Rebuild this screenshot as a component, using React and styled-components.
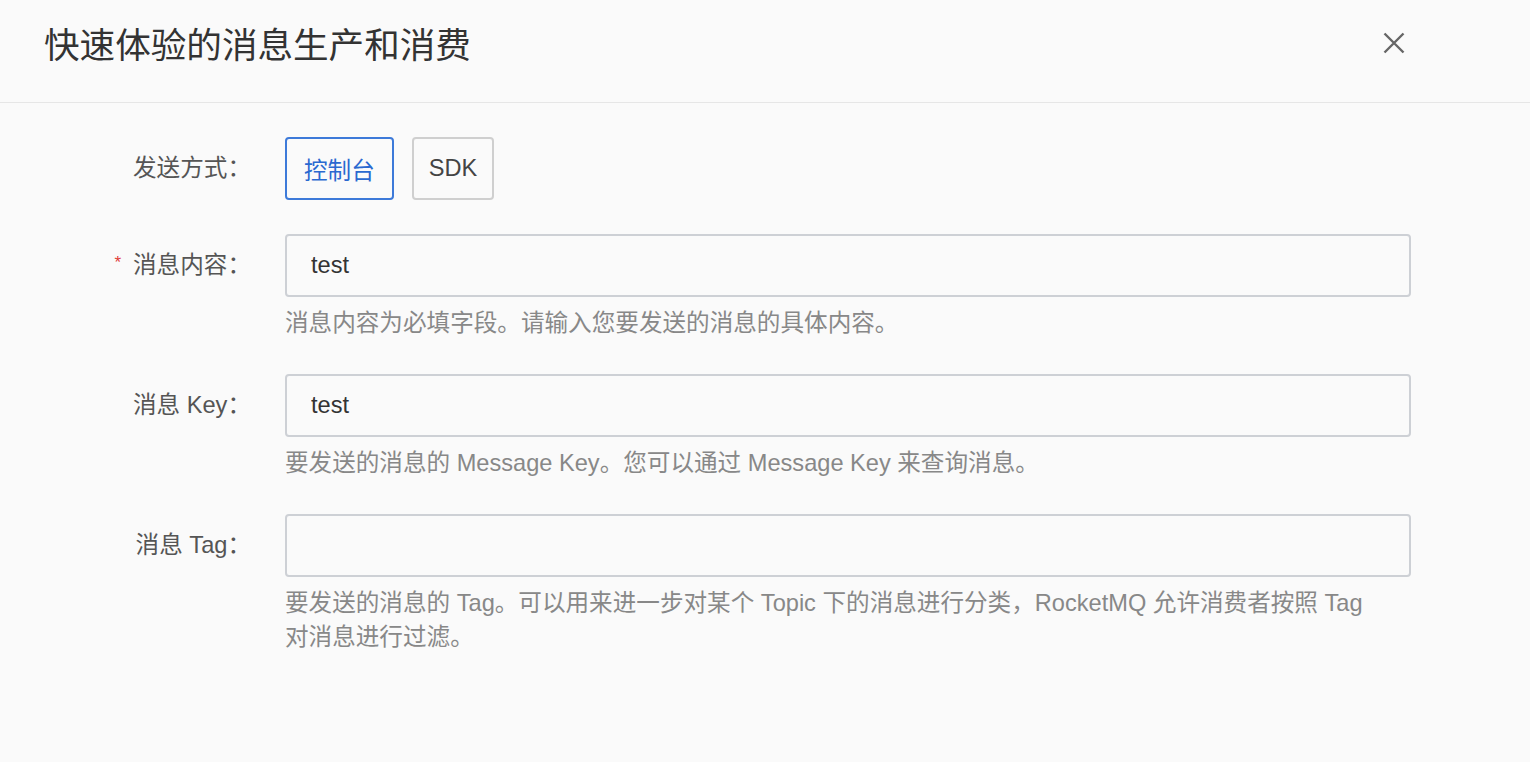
import React from "react";
import styled, { createGlobalStyle } from "styled-components";

const Global = createGlobalStyle`
  html, body { margin: 0; padding: 0; background: #fafafa; }
  body { font-family: "Liberation Sans", "Noto Sans CJK SC", sans-serif; color: #333; }
  * { box-sizing: border-box; }
`;

const Page = styled.div`
  width: 1530px;
  min-height: 762px;
  background: #fafafa;
`;

const Header = styled.header`
  height: 103px;
  border-bottom: 1px solid #e6e6e6;
  display: flex;
  align-items: center;
  justify-content: space-between;
  padding: 0 124px 16px 44px;
`;

const Title = styled.h1`
  margin: 0;
  font-size: 35.6px;
  font-weight: 400;
  color: #333;
  font-family: "Noto Sans CJK SC", sans-serif;
  line-height: 1;
`;

const CloseButton = styled.button`
  border: 0;
  background: transparent;
  padding: 0;
  width: 24px;
  height: 24px;
  display: flex;
  align-items: center;
  justify-content: center;
  cursor: pointer;
`;

const Form = styled.div`
  padding: 34px 119px 0 0;
  display: flex;
  flex-direction: column;
  gap: 34px;
`;

const Row = styled.div`
  display: grid;
  grid-template-columns: 251px 1fr;
  column-gap: 34px;
  align-items: start;
`;

const Label = styled.div`
  text-align: right;
  font-size: 23.6px;
  line-height: 62px;
  color: #555;
  white-space: nowrap;
`;

const Required = styled.span`
  color: #e0403a;
  font-size: 17px;
  margin-right: 12px;
  position: relative;
  top: -5px;
`;

const Control = styled.div`
  display: flex;
  flex-direction: column;
`;

const ButtonGroup = styled.div`
  display: flex;
  gap: 18px;
`;

const Choice = styled.button`
  height: 63px;
  padding: 0 ${(p) => (p.$active ? "17px" : "15px")};
  font-family: "Liberation Sans", "Noto Sans CJK SC", sans-serif;
  font-size: 23.6px;
  background: #fafafa;
  border-radius: 4px;
  border: 2px solid ${(p) => (p.$active ? "#3d7ad9" : "#cfcfcf")};
  color: ${(p) => (p.$active ? "#2a69d0" : "#444")};
  cursor: pointer;
`;

const Input = styled.input`
  height: 63px;
  width: 100%;
  border: 2px solid #cdd0d5;
  border-radius: 4px;
  background: #fafafa;
  padding: 0 24px;
  font-family: "Liberation Sans", "Noto Sans CJK SC", sans-serif;
  font-size: 23.6px;
  color: #333;
  outline: none;
`;

const Help = styled.div`
  margin-top: 9px;
  font-size: 23.6px;
  line-height: 34px;
  color: #888;
`;

function CloseIcon() {
  return (
    <svg width="22" height="22" viewBox="0 0 22 22">
      <path d="M1.5 1.5 L20.5 20.5 M20.5 1.5 L1.5 20.5" stroke="#666" strokeWidth="2.4" fill="none" />
    </svg>
  );
}

export default function App() {
  return (
    <Page>
      <Global />
      <Header>
        <Title>快速体验的消息生产和消费</Title>
        <CloseButton aria-label="close">
          <CloseIcon />
        </CloseButton>
      </Header>
      <Form>
        <Row>
          <Label>发送方式：</Label>
          <Control>
            <ButtonGroup>
              <Choice $active>控制台</Choice>
              <Choice>SDK</Choice>
            </ButtonGroup>
          </Control>
        </Row>
        <Row>
          <Label>
            <Required>*</Required>消息内容：
          </Label>
          <Control>
            <Input defaultValue="test" />
            <Help>消息内容为必填字段。请输入您要发送的消息的具体内容。</Help>
          </Control>
        </Row>
        <Row>
          <Label>消息 Key：</Label>
          <Control>
            <Input defaultValue="test" />
            <Help>要发送的消息的 Message Key。您可以通过 Message Key 来查询消息。</Help>
          </Control>
        </Row>
        <Row>
          <Label>消息 Tag：</Label>
          <Control>
            <Input defaultValue="" />
            <Help>
              要发送的消息的 Tag。可以用来进一步对某个 Topic 下的消息进行分类，RocketMQ 允许消费者按照 Tag
              <br />
              对消息进行过滤。
            </Help>
          </Control>
        </Row>
      </Form>
    </Page>
  );
}
